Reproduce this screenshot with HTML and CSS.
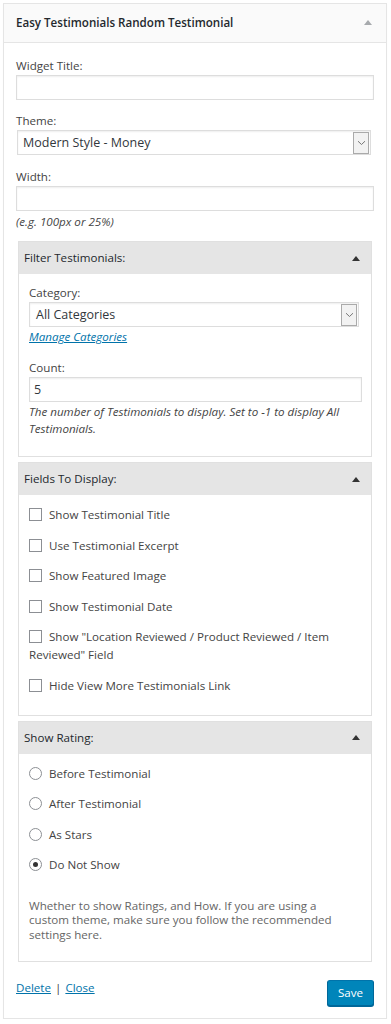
FILE: index.html
```html
<!DOCTYPE html>
<html lang="en">
<head>
<meta charset="utf-8">
<title>Easy Testimonials Random Testimonial</title>
<link rel="stylesheet" href="styles.css">
</head>
<body>
<div class="widget">
  <div class="widget-top">
    <h3 class="widget-title">Easy Testimonials Random Testimonial</h3>
    <span class="arrow arrow-light"></span>
  </div>
  <div class="widget-inside">
    <div class="field">
      <label class="label">Widget Title:</label>
      <div class="input"></div>
    </div>
    <div class="field">
      <label class="label">Theme:</label>
      <div class="select select-wide">
        <span class="select-value">Modern Style - Money</span>
        <span class="select-btn"><svg width="9" height="6" viewBox="0 0 9 6"><path d="M1 1.2 L4.5 4.5 L8 1.2" fill="none" stroke="#777" stroke-width="1"/></svg></span>
      </div>
    </div>
    <div class="field field-width">
      <label class="label">Width:</label>
      <div class="input"></div>
      <div class="hint">(e.g. 100px or 25%)</div>
    </div>

    <div class="panel panel-filter">
      <div class="panel-head"><span>Filter Testimonials:</span><span class="arrow arrow-dark"></span></div>
      <div class="panel-body">
        <label class="label">Category:</label>
        <div class="select select-cat">
          <span class="select-value">All Categories</span>
          <span class="select-btn"><svg width="9" height="6" viewBox="0 0 9 6"><path d="M1 1.2 L4.5 4.5 L8 1.2" fill="none" stroke="#777" stroke-width="1"/></svg></span>
        </div>
        <a class="manage-link" href="#">Manage Categories</a>
        <label class="label label-count">Count:</label>
        <div class="input input-count">5</div>
        <div class="desc-italic">The number of Testimonials to display. Set to -1 to display All Testimonials.</div>
      </div>
    </div>

    <div class="panel">
      <div class="panel-head"><span>Fields To Display:</span><span class="arrow arrow-dark"></span></div>
      <div class="panel-body option-list">
        <div class="option"><span class="checkbox"></span>Show Testimonial Title</div>
        <div class="option"><span class="checkbox"></span>Use Testimonial Excerpt</div>
        <div class="option"><span class="checkbox"></span>Show Featured Image</div>
        <div class="option"><span class="checkbox"></span>Show Testimonial Date</div>
        <div class="option"><span class="checkbox"></span>Show "Location Reviewed / Product Reviewed / Item Reviewed" Field</div>
        <div class="option"><span class="checkbox"></span>Hide View More Testimonials Link</div>
      </div>
    </div>

    <div class="panel">
      <div class="panel-head"><span>Show Rating:</span><span class="arrow arrow-dark"></span></div>
      <div class="panel-body option-list rating-list">
        <div class="option"><span class="radio"></span>Before Testimonial</div>
        <div class="option"><span class="radio"></span>After Testimonial</div>
        <div class="option"><span class="radio"></span>As Stars</div>
        <div class="option"><span class="radio checked"></span>Do Not Show</div>
        <div class="rating-desc">Whether to show Ratings, and How. If you are using a custom theme, make sure you follow the recommended settings here.</div>
      </div>
    </div>

    <div class="actions">
      <div class="links"><a href="#">Delete</a><span class="sep">|</span><a href="#">Close</a></div>
      <button class="save" type="button">Save</button>
    </div>
  </div>
</div>
</body>
</html>
```

FILE: styles.css
```css
* { box-sizing: border-box; }

body {
  margin: 0;
  background: #fff;
  font-family: "Open Sans", "Noto Sans", sans-serif;
  font-size: 11.6px;
  color: #444;
}

.widget {
  margin: 3px 0 0 3px;
  width: 384px;
  border: 1px solid #e5e5e5;
  box-shadow: 0 1px 1px rgba(0,0,0,.04);
  background: #fff;
}

.widget-top {
  display: flex;
  align-items: center;
  justify-content: space-between;
  background: #fafafa;
  border-bottom: 1px solid #e5e5e5;
  padding: 9px 14px 10px 12px;
}

.widget-title {
  margin: 0;
  font-size: 11.6px;
  line-height: 19px;
  font-weight: 600;
  color: #23282d;
}

.arrow {
  width: 0;
  height: 0;
  border-left: 4px solid transparent;
  border-right: 4px solid transparent;
  border-bottom: 5px solid #a0a5aa;
}
.arrow-light { border-bottom-color: #a7aaad; }
.arrow-dark { border-bottom-color: #333; }

.widget-inside {
  padding: 0 12px 12px 12px;
}

.field { margin-top: 12px; }
.field:first-child { margin-top: 14px; }
.field-width { margin-top: 13px; }

.label {
  display: block;
  line-height: 18px;
  color: #444;
}

.input {
  height: 25px;
  width: 100%;
  border: 1px solid #ddd;
  box-shadow: inset 0 1px 2px rgba(0,0,0,.07);
  background: #fff;
  padding: 0 4px;
  line-height: 23px;
  font-size: 12.5px;
  color: #32373c;
}

.select {
  display: flex;
  align-items: center;
  justify-content: space-between;
  height: 25px;
  border: 1px solid #ddd;
  box-shadow: inset 0 1px 2px rgba(0,0,0,.07);
  background: #fff;
  padding: 0 1px 0 5px;
  font-size: 12.5px;
  color: #32373c;
}
.select-wide { width: 354px; margin-left: 1px; }
.select-btn {
  display: flex;
  align-items: center;
  justify-content: center;
  width: 16px;
  height: 22px;
  border: 1px solid #aaa;
  background: #f2f2f2;
}

.hint {
  font-style: italic;
  line-height: 18px;
  margin-top: 2px;
}

.panel {
  margin: 10px 2px 0 2px;
  border: 1px solid #e0e0e0;
}
.panel + .panel { margin-top: 5px; }

.panel-head {
  display: flex;
  align-items: center;
  justify-content: space-between;
  background: #e5e5e5;
  padding: 7px 11px 7px 5px;
  line-height: 18px;
  color: #23282d;
}

.panel-body {
  padding: 10px 9px 19px 10px;
}

.select-cat { width: 330px; padding-left: 6px; }

.manage-link {
  display: block;
  font-style: italic;
  color: #0073aa;
  text-decoration: underline;
  line-height: 18px;
  margin-top: 1px;
  width: max-content;
}

.label-count { margin-top: 13px; }
.input-count { width: 333px; }

.desc-italic {
  font-style: italic;
  line-height: 17px;
  margin-top: 1px;
}

.option-list {
  display: flex;
  flex-direction: column;
  gap: 12.5px;
  padding: 11px 10px 20px 10px;
}

.option {
  line-height: 18px;
  color: #444;
}

.checkbox,
.radio {
  display: inline-block;
  vertical-align: -2px;
  width: 13px;
  height: 13px;
  margin-right: 7px;
  border: 1px solid #8c8f94;
  background: #fff;
}

.radio {
  border-radius: 50%;
  position: relative;
}
.radio.checked::after {
  content: "";
  position: absolute;
  left: 3px;
  top: 3px;
  width: 5px;
  height: 5px;
  border-radius: 50%;
  background: #333;
}

.rating-list { padding-bottom: 19px; }

.rating-desc {
  margin-top: 12px;
  margin-right: 16px;
  line-height: 14.5px;
  color: #666;
}

.actions {
  display: flex;
  justify-content: space-between;
  align-items: flex-start;
  margin-top: 17px;
}

.links {
  line-height: 18px;
}
.links a {
  color: #0073aa;
  text-decoration: underline;
}
.sep { margin: 0 4px; color: #444; }

.save {
  margin-top: 1px;
  height: 26px;
  padding: 0 10px;
  border: 1px solid #0073aa;
  border-color: #0073aa #006799 #006799;
  border-radius: 3px;
  background: #0085ba;
  box-shadow: 0 1px 0 #006799;
  color: #fff;
  font-family: "Open Sans", "Noto Sans", sans-serif;
  font-size: 11.6px;
  line-height: 24px;
}
```
